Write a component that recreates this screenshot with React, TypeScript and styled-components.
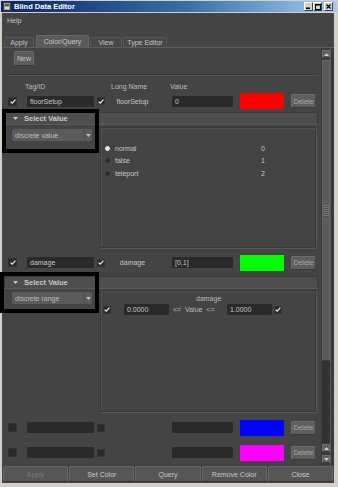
import React from 'react';
import styled, { createGlobalStyle } from 'styled-components';

const GlobalStyle = createGlobalStyle`
  html, body {
    margin: 0;
    padding: 0;
    background: #d4d0c8;
  }
  body {
    font-family: "Liberation Sans", Arial, sans-serif;
    font-size: 7px;
    color: #c8c8c8;
  }
  * { box-sizing: border-box; }
`;

const Window = styled.div`
  width: 338px;
  height: 487px;
  padding: 1px;
  display: flex;
  flex-direction: column;
  background: #d4d0c8;
`;

const TitleBar = styled.div`
  height: 11px;
  display: flex;
  align-items: center;
  padding: 0 4px 0 2px;
  background: linear-gradient(to right, #0a246a, #3a6ea5 55%, #a6caf0);
  color: #fff;
  font-weight: bold;
  font-size: 7.5px;
`;

const TitleText = styled.span`
  margin-left: 3px;
  flex: 1;
`;

const WinButton = styled.div<{ $gap?: boolean }>`
  width: 9px;
  height: 9px;
  margin-left: ${p => (p.$gap ? '2px' : '0')};
  background: #d4d0c8;
  border: 1px solid;
  border-color: #fff #404040 #404040 #fff;
  display: flex;
  align-items: center;
  justify-content: center;
`;

const Body = styled.div`
  flex: 1;
  margin: 1px 3px 3px 1px;
  background: #444444;
  display: flex;
  flex-direction: column;
`;

const MenuBar = styled.div`
  height: 14px;
  line-height: 15px;
  padding-left: 5px;
`;

const TabBar = styled.div`
  margin-top: 8px;
  height: 12px;
  display: flex;
  align-items: flex-end;
  padding-left: 2px;
`;

const Tab = styled.div<{ $w: number; $selected?: boolean; $ml?: number }>`
  width: ${p => p.$w}px;
  height: ${p => (p.$selected ? 12 : 10)}px;
  margin-left: ${p => p.$ml ?? 0}px;
  background: ${p => (p.$selected ? '#5a5a5a' : '#484848')};
  border: 1px solid ${p => (p.$selected ? '#676767' : '#575757')};
  border-bottom: none;
  border-radius: 2px 2px 0 0;
  display: flex;
  align-items: center;
  justify-content: center;
  color: #c4c4c4;
`;

const Content = styled.div`
  flex: 1;
  display: flex;
  border-top: 1px solid #5c5c5c;
  padding-left: 1px;
`;

const Main = styled.div`
  width: 318px;
  display: flex;
  flex-direction: column;
`;

const NewButton = styled.div`
  margin: 3px 0 0 11px;
  width: 20px;
  height: 15px;
  background: #5c5c5c;
  border: 1px solid #6a6a6a;
  border-bottom-color: #383838;
  border-radius: 2px;
  display: flex;
  align-items: center;
  justify-content: center;
  color: #c4c4c4;
`;

const Separator = styled.div`
  margin: 8px 3px 0 5px;
  height: 2px;
  border-top: 1px solid #363636;
  border-bottom: 1px solid #555555;
`;

const Grid = styled.div<{ $h: number; $head?: boolean }>`
  height: ${p => p.$h}px;
  display: grid;
  grid-template-columns: 19px 70px 8px 67px 68px 51px 25px;
  align-items: ${p => (p.$head ? 'end' : 'center')};
  padding-left: 5px;
  padding-bottom: ${p => (p.$head ? 1 : 0)}px;
`;

const HeadLabel = styled.span<{ $ml: number }>`
  margin-left: ${p => p.$ml}px;
  color: #bcbcbc;
  white-space: nowrap;
`;

const Check = styled.div<{ $size?: number }>`
  width: ${p => p.$size ?? 8}px;
  height: ${p => p.$size ?? 8}px;
  background: #2a2a2a;
  border: 1px solid #333;
  display: flex;
  align-items: center;
  justify-content: center;
`;

const Field = styled.div<{ $w: number }>`
  width: ${p => p.$w}px;
  height: 11px;
  line-height: 11px;
  padding-left: 3px;
  background: #2a2a2a;
  border-radius: 1px;
  color: #c8c8c8;
  white-space: nowrap;
`;

const LongName = styled.span`
  text-align: center;
  padding-right: 12px;
  color: #c4c4c4;
`;

const Swatch = styled.div<{ $color: string }>`
  width: 44px;
  height: 16px;
  background: ${p => p.$color};
`;

const SmallButton = styled.div`
  width: 25px;
  height: 14px;
  background: #5e5e5e;
  border: 1px solid #6c6c6c;
  border-bottom-color: #3a3a3a;
  border-right-color: #444;
  border-radius: 2px;
  display: flex;
  align-items: center;
  justify-content: center;
  color: #a8a8a8;
`;

const Section = styled.div<{ $mt: number }>`
  position: relative;
  margin-top: ${p => p.$mt}px;
`;

const FrameHeader = styled.div`
  height: 13px;
  margin: 0 3px 0 1px;
  background: #4e4e4e;
  border: 1px solid #3a3a3a;
  border-bottom-color: #5a5a5a;
  display: flex;
  align-items: center;
  padding-left: 8px;
  gap: 6px;
  font-weight: bold;
  font-size: 7.5px;
  color: #c8c8c8;
`;

const FrameBody = styled.div`
  height: 126px;
  display: flex;
`;

const LeftCol = styled.div<{ $pt: number }>`
  width: 97px;
  padding: ${p => p.$pt}px 0 0 9px;
`;

const Dropdown = styled.div`
  width: 80px;
  height: 12px;
  background: #5b5b5b;
  border-radius: 2px;
  display: flex;
  align-items: center;
  color: #bdbdbd;
`;

const DropText = styled.span`
  flex: 1;
  padding-left: 3px;
  white-space: nowrap;
`;

const DropArrow = styled.div`
  width: 8px;
  height: 100%;
  border-left: 1px solid #4a4a4a;
  display: flex;
  align-items: center;
  justify-content: center;
`;

const ListPanel = styled.div<{ $mt: number; $h: number }>`
  margin-top: ${p => p.$mt}px;
  width: 216px;
  height: ${p => p.$h}px;
  border: 1px solid #3a3a3a;
  box-shadow: 1px 1px 0 #575757, inset 1px 1px 0 #525252;
  display: flex;
  flex-direction: column;
`;

const RadioList = styled.div`
  padding: 14px 0 0 4px;
`;

const RadioRow = styled.div`
  height: 12.5px;
  display: grid;
  grid-template-columns: 10px 146px auto;
  align-items: center;
`;

const Dot = styled.div<{ $on?: boolean }>`
  width: 5px;
  height: 5px;
  border-radius: 50%;
  background: ${p => (p.$on ? '#e6e6e6' : '#2a2a2a')};
  border: 1px solid ${p => (p.$on ? '#f0f0f0' : '#333')};
`;

const RangeLabel = styled.div`
  margin: 3px 0 0 95px;
  height: 9px;
  line-height: 9px;
  color: #bdbdbd;
`;

const RangeRow = styled.div`
  height: 13px;
  display: grid;
  grid-template-columns: 21px 48px 55px 47px 8px;
  align-items: center;
  padding-left: 2px;
`;

const RangeText = styled.span`
  padding-left: 1px;
  white-space: pre;
  color: #bdbdbd;
`;

const Highlight = styled.div<{ $top: number; $left: number; $w: number; $h: number }>`
  position: absolute;
  top: ${p => p.$top}px;
  left: ${p => p.$left}px;
  width: ${p => p.$w}px;
  height: ${p => p.$h}px;
  border: 4px solid #000;
  pointer-events: none;
`;

const ScrollBar = styled.div`
  width: 10px;
  display: flex;
  flex-direction: column;
  padding: 2px 0 2px 1px;
  background: #3b3b3b;
  border-right: 1px solid #595959;
`;

const ArrowBtn = styled.div<{ $mt?: number }>`
  height: 8px;
  margin-top: ${p => p.$mt ?? 0}px;
  background: #5e5e5e;
  border: 1px solid #707070;
  border-bottom-color: #404040;
  border-radius: 1px;
  display: flex;
  align-items: center;
  justify-content: center;
`;

const Thumb = styled.div`
  height: 301px;
  margin-top: 2px;
  background: #5a5a5a;
  border: 1px solid #686868;
  border-bottom-color: #3e3e3e;
  display: flex;
  align-items: center;
  justify-content: center;
`;

const Grip = styled.div`
  width: 7px;
  height: 12px;
  background: repeating-linear-gradient(to bottom, #777 0 1px, transparent 1px 2px),
    repeating-linear-gradient(to right, #444 0 1px, transparent 1px 2px);
`;

const Track = styled.div`
  flex: 1;
  margin-bottom: 1px;
  background: repeating-linear-gradient(45deg, #2f2f2f 0 1px, #353535 1px 2px);
`;

const RightGap = styled.div`
  width: 3px;
  background: #3a3a3a;
`;

const ButtonBar = styled.div`
  height: 16px;
  margin: 1px 0 1px;
  padding: 0 1px;
  display: flex;
  gap: 1px;
`;

const BarButton = styled.div<{ $disabled?: boolean }>`
  flex: 1;
  background: #565656;
  border: 1px solid #666;
  border-bottom-color: #363636;
  border-radius: 2px;
  display: flex;
  align-items: center;
  justify-content: center;
  color: ${p => (p.$disabled ? '#7a7a7a' : '#c8c8c8')};
`;

const CheckMark = () => (
  <svg width="6" height="5" viewBox="0 0 6 5">
    <path d="M0.6 2.6 L2.2 4.2 L5.4 0.6" stroke="#ececec" strokeWidth="1.2" fill="none" />
  </svg>
);

const DownTri = ({ c = '#c8c8c8' }: { c?: string }) => (
  <svg width="5" height="3" viewBox="0 0 5 3">
    <polygon points="0,0 5,0 2.5,3" fill={c} />
  </svg>
);

const UpTri = ({ c = '#cfcfcf' }: { c?: string }) => (
  <svg width="5" height="3" viewBox="0 0 5 3">
    <polygon points="0,3 5,3 2.5,0" fill={c} />
  </svg>
);

const AppIcon = () => (
  <svg width="8" height="9" viewBox="0 0 8 9">
    <rect x="0.5" y="0.5" width="7" height="8" fill="#9a9a9a" stroke="#3c3c3c" />
    <rect x="2" y="2" width="4" height="2" fill="#5a5a5a" />
    <rect x="2" y="5" width="4" height="2" fill="#d8d8d8" />
  </svg>
);

type RowProps = {
  tag?: string;
  long?: string;
  value?: string;
  color: string;
  checked?: boolean;
  h: number;
};

const DataRow = ({ tag, long, value, color, checked, h }: RowProps) => (
  <Grid $h={h}>
    <Check $size={9}>{checked && <CheckMark />}</Check>
    <Field $w={67}>{tag}</Field>
    <Check>{checked && <CheckMark />}</Check>
    <LongName>{long}</LongName>
    <Field $w={61}>{value}</Field>
    <Swatch $color={color} />
    <SmallButton>Delete</SmallButton>
  </Grid>
);

const discreteValues = [
  ['normal', '0'],
  ['false', '1'],
  ['teleport', '2'],
];

const App = () => {
  return (
    <>
      <GlobalStyle />
      <Window>
        <TitleBar>
          <AppIcon />
          <TitleText>Blind Data Editor</TitleText>
          <WinButton>
            <svg width="5" height="5" viewBox="0 0 5 5"><rect x="0" y="3.5" width="4" height="1.5" fill="#000" /></svg>
          </WinButton>
          <WinButton>
            <svg width="6" height="6" viewBox="0 0 6 6"><rect x="0.5" y="0.5" width="5" height="5" fill="none" stroke="#000" /><rect x="0" y="0" width="6" height="1.5" fill="#000" /></svg>
          </WinButton>
          <WinButton $gap>
            <svg width="5" height="5" viewBox="0 0 5 5"><path d="M0.5 0.5 L4.5 4.5 M4.5 0.5 L0.5 4.5" stroke="#000" strokeWidth="1.2" /></svg>
          </WinButton>
        </TitleBar>
        <Body>
          <MenuBar>Help</MenuBar>
          <TabBar>
            <Tab $w={30}>Apply</Tab>
            <Tab $w={53} $ml={2} $selected>Color/Query</Tab>
            <Tab $w={32} $ml={1}>View</Tab>
            <Tab $w={44} $ml={1}>Type Editor</Tab>
          </TabBar>
          <Content>
            <Main>
              <NewButton>New</NewButton>
              <Separator />
              <Grid $h={15} $head>
                <span />
                <HeadLabel $ml={-2}>Tag/ID</HeadLabel>
                <span />
                <HeadLabel $ml={6}>Long Name</HeadLabel>
                <HeadLabel $ml={-2}>Value</HeadLabel>
              </Grid>
              <DataRow h={20} tag="floorSetup" long="floorSetup" value="0" color="#ff0000" checked />

              <Section $mt={1}>
                <FrameHeader>
                  <DownTri />
                  <span>Select Value</span>
                </FrameHeader>
                <FrameBody>
                  <LeftCol $pt={4}>
                    <Dropdown>
                      <DropText>discrete value</DropText>
                      <DropArrow><DownTri c="#bdbdbd" /></DropArrow>
                    </Dropdown>
                  </LeftCol>
                  <ListPanel $mt={2} $h={121}>
                    <RadioList>
                      {discreteValues.map(([name, v], i) => (
                        <RadioRow key={name}>
                          <Dot $on={i === 0} />
                          <span>{name}</span>
                          <span>{v}</span>
                        </RadioRow>
                      ))}
                    </RadioList>
                  </ListPanel>
                </FrameBody>
                <Highlight $top={-3} $left={-1} $w={97} $h={44} />
              </Section>

              <DataRow h={23} tag="damage" long="damage" value="[0,1]" color="#00ff00" checked />

              <Section $mt={2}>
                <FrameHeader>
                  <DownTri />
                  <span>Select Value</span>
                </FrameHeader>
                <FrameBody>
                  <LeftCol $pt={3}>
                    <Dropdown>
                      <DropText>discrete range</DropText>
                      <DropArrow><DownTri c="#bdbdbd" /></DropArrow>
                    </Dropdown>
                  </LeftCol>
                  <ListPanel $mt={1} $h={122}>
                    <RangeLabel>damage</RangeLabel>
                    <RangeRow>
                      <Check><CheckMark /></Check>
                      <Field $w={45}>0.0000</Field>
                      <RangeText>{'<=  Value  <='}</RangeText>
                      <Field $w={45}>1.0000</Field>
                      <Check><CheckMark /></Check>
                    </RangeRow>
                  </ListPanel>
                </FrameBody>
                <Highlight $top={-4} $left={-3} $w={99} $h={41} />
              </Section>

              <DataRow h={25} color="#0000ff" />
              <DataRow h={25} color="#ff00ff" />
            </Main>
            <ScrollBar>
              <ArrowBtn><UpTri /></ArrowBtn>
              <Thumb><Grip /></Thumb>
              <Track />
              <ArrowBtn><UpTri /></ArrowBtn>
              <ArrowBtn $mt={3}><DownTri c="#cfcfcf" /></ArrowBtn>
            </ScrollBar>
            <RightGap />
          </Content>
          <ButtonBar>
            <BarButton $disabled>Apply</BarButton>
            <BarButton>Set Color</BarButton>
            <BarButton>Query</BarButton>
            <BarButton>Remove Color</BarButton>
            <BarButton>Close</BarButton>
          </ButtonBar>
        </Body>
      </Window>
    </>
  );
};

export default App;
